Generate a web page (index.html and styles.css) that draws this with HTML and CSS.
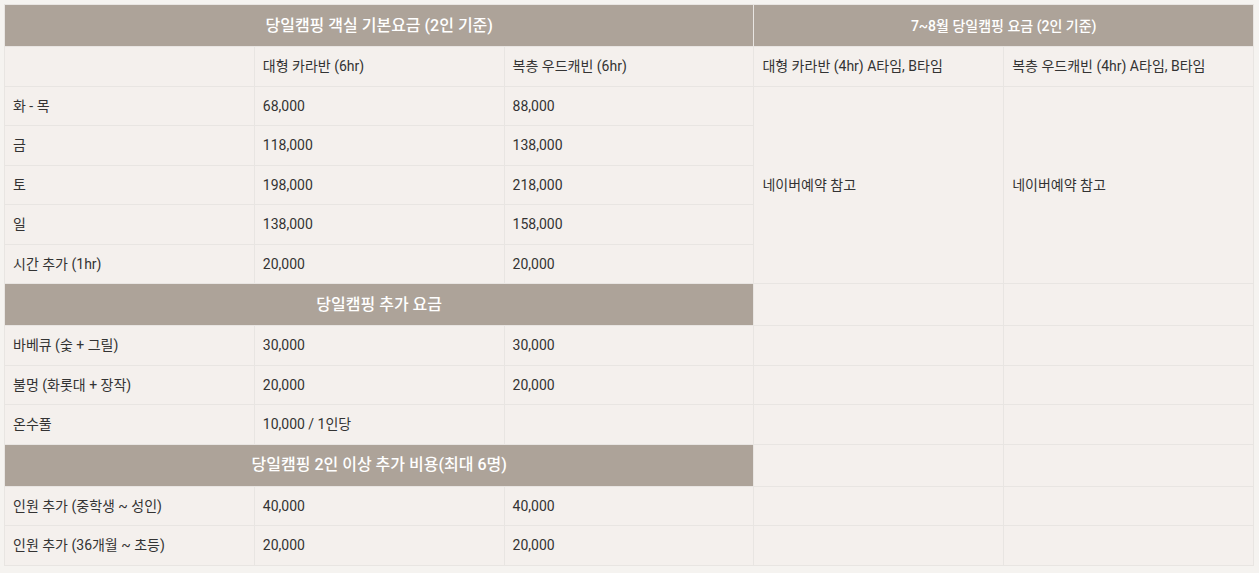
FILE: index.html
```html
<!DOCTYPE html>
<html lang="ko">
<head>
    <meta charset="UTF-8">
    <meta name="viewport" content="width=device-width, initial-scale=1.0">
    <title>당일캠핑 요금</title>
    <link rel="stylesheet" href="styles.css">
</head>
<body>
    <table class="price-table">
        <tr class="head-row">
            <th colspan="3">당일캠핑 객실 기본요금 (2인 기준)</th>
            <th colspan="2" class="small-head">7~8월 당일캠핑 요금 (2인 기준)</th>
        </tr>
        <tr>
            <td></td>
            <td>대형 카라반 (6hr)</td>
            <td>복층 우드캐빈 (6hr)</td>
            <td>대형 카라반 (4hr) A타임, B타임</td>
            <td>복층 우드캐빈 (4hr) A타임, B타임</td>
        </tr>
        <tr>
            <td>화 - 목</td>
            <td>68,000</td>
            <td>88,000</td>
            <td rowspan="5">네이버예약 참고</td>
            <td rowspan="5">네이버예약 참고</td>
        </tr>
        <tr>
            <td>금</td>
            <td>118,000</td>
            <td>138,000</td>
        </tr>
        <tr>
            <td>토</td>
            <td>198,000</td>
            <td>218,000</td>
        </tr>
        <tr>
            <td>일</td>
            <td>138,000</td>
            <td>158,000</td>
        </tr>
        <tr>
            <td>시간 추가 (1hr)</td>
            <td>20,000</td>
            <td>20,000</td>
        </tr>
        <tr class="head-row">
            <th colspan="3">당일캠핑 추가 요금</th>
            <td></td>
            <td></td>
        </tr>
        <tr>
            <td>바베큐 (숯 + 그릴)</td>
            <td>30,000</td>
            <td>30,000</td>
            <td></td>
            <td></td>
        </tr>
        <tr>
            <td>불멍 (화롯대 + 장작)</td>
            <td>20,000</td>
            <td>20,000</td>
            <td></td>
            <td></td>
        </tr>
        <tr>
            <td>온수풀</td>
            <td>10,000 / 1인당</td>
            <td></td>
            <td></td>
            <td></td>
        </tr>
        <tr class="head-row">
            <th colspan="3">당일캠핑 2인 이상 추가 비용(최대 6명)</th>
            <td></td>
            <td></td>
        </tr>
        <tr>
            <td>인원 추가 (중학생 ~ 성인)</td>
            <td>40,000</td>
            <td>40,000</td>
            <td></td>
            <td></td>
        </tr>
        <tr>
            <td>인원 추가 (36개월 ~ 초등)</td>
            <td>20,000</td>
            <td>20,000</td>
            <td></td>
            <td></td>
        </tr>
    </table>
</body>
</html>
```

FILE: styles.css
```css
* {
    margin: 0;
    padding: 0;
    box-sizing: border-box;
}
body {
    background: #f5f3f0;
    padding: 4px;
    font-family: Roboto, "Noto Sans CJK KR", sans-serif;
    color: #333;
}
.price-table {
    width: 1250px;
    border-collapse: collapse;
    table-layout: fixed;
    background: #f4f0ed;
    border: 1px solid #e8e5e2;
}
.price-table td {
    border: 1px solid #e8e5e2;
    padding: 0 8px;
    font-size: 14px;
    line-height: 20px;
    height: 39.5px;
    text-align: left;
    vertical-align: middle;
}
.price-table th {
    background: #ada399;
    color: #fff;
    font-size: 16px;
    font-weight: 500;
    line-height: 22px;
    height: 42px;
    padding: 0 8px;
    text-align: center;
    border: 1px solid #e8e5e2;
}
.price-table th.small-head {
    font-size: 14px;
}
```
